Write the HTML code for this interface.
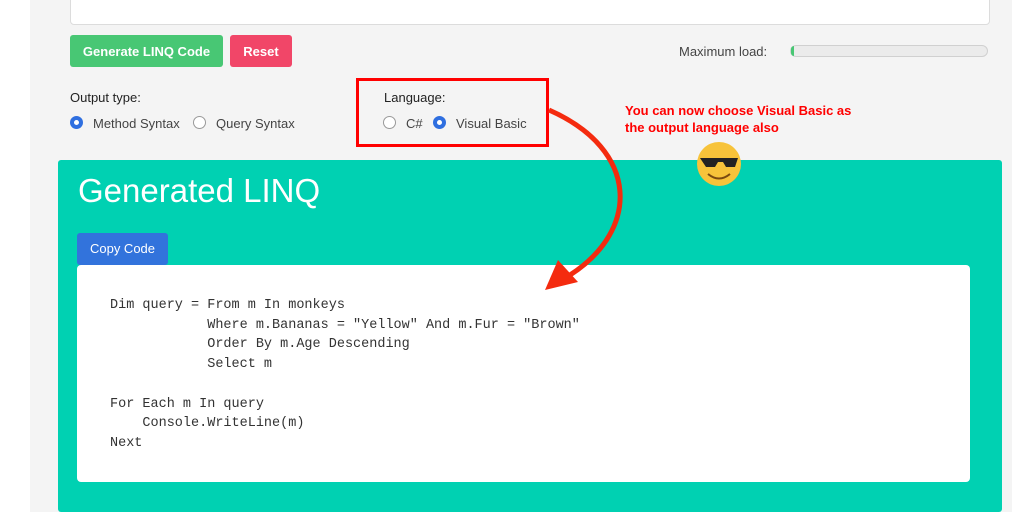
<!DOCTYPE html>
<html><head><style>
body{margin:0;width:1024px;height:512px;overflow:hidden;background:#fff;font-family:"Liberation Sans",sans-serif;position:relative}
.pg{position:absolute;left:30px;top:0;width:982px;height:512px;background:#f4f4f4}
.a{position:absolute}
.ta{left:70px;top:-5px;width:918px;height:28px;background:#fff;border:1px solid #dcdcdc;border-radius:4px}
.btn{color:#fff;font-weight:bold;font-size:13px;border-radius:3px;text-align:center;line-height:33px;height:32px}
.lbl{font-size:13px;color:#222}
.rad{width:13px;height:13px;border-radius:50%;border:1px solid #999;background:#fff;display:inline-block;box-sizing:border-box}
.rad.on{border:4px solid #2f6fe0}
.opt{font-size:13px;color:#444}
.code{font-family:"Liberation Mono",monospace;font-size:13.5px;line-height:19.7px;color:#333;white-space:pre}
</style></head><body>
<div class="pg"></div>
<div class="a ta"></div>
<div class="a btn" style="left:70px;top:35px;width:153px;background:#48c774">Generate LINQ Code</div>
<div class="a btn" style="left:230px;top:35px;width:62px;background:#f14668">Reset</div>
<div class="a lbl" style="left:679px;top:44px;color:#444">Maximum load:</div>
<div class="a" style="left:790px;top:45px;width:198px;height:12px;border:1px solid #d0d0d0;border-radius:6px;background:#ebebeb;box-sizing:border-box"><div style="width:3px;height:10px;background:#48c774;border-radius:4px 0 0 4px"></div></div>
<div class="a lbl" style="left:70px;top:90px">Output type:</div>
<div class="a rad on" style="left:70px;top:116px"></div>
<div class="a opt" style="left:93px;top:116px">Method Syntax</div>
<div class="a rad" style="left:193px;top:116px"></div>
<div class="a opt" style="left:216px;top:116px">Query Syntax</div>
<div class="a" style="left:356px;top:78px;width:193px;height:69px;border:3px solid #f00;box-sizing:border-box"></div>
<div class="a lbl" style="left:384px;top:90px">Language:</div>
<div class="a rad" style="left:383px;top:116px"></div>
<div class="a opt" style="left:406px;top:116px">C#</div>
<div class="a rad on" style="left:433px;top:116px"></div>
<div class="a opt" style="left:456px;top:116px">Visual Basic</div>
<div class="a" style="left:625px;top:102px;color:#f00;font-size:13px;font-weight:bold;line-height:17px">You can now choose Visual Basic as<br>the output language also</div>
<div class="a" style="left:58px;top:160px;width:944px;height:352px;background:#00d1b2;border-radius:3px"></div>
<div class="a" style="left:78px;top:172px;color:#fff;font-size:33px">Generated LINQ</div>
<div class="a" style="left:77px;top:233px;width:91px;height:32px;background:#3273dc;color:#fff;font-size:13px;line-height:32px;text-align:center;border-radius:3px">Copy Code</div>
<div class="a" style="left:77px;top:265px;width:893px;height:217px;background:#fff;border-radius:4px"></div>
<div class="a code" style="left:110px;top:296px">Dim query = From m In monkeys
            Where m.Bananas = "Yellow" And m.Fur = "Brown"
            Order By m.Age Descending
            Select m

For Each m In query
    Console.WriteLine(m)
Next</div>
<svg class="a" style="left:0;top:0" width="1024" height="512">
<path d="M549 110 C640 150 640 230 570 275" stroke="#f42b0f" stroke-width="5" fill="none"/>
<polygon points="545,290 558,260 578,282" fill="#f42b0f"/>
<circle cx="719" cy="164" r="22" fill="#f7c33a"/>
<path d="M700 158 h38 l-3 9 h-9 l-3-5 h-5 l-3 5 h-9z" fill="#222"/>
<path d="M708 174 q11 9 22 0" stroke="#7a4a10" stroke-width="2" fill="none"/>
</svg>
</body></html>
